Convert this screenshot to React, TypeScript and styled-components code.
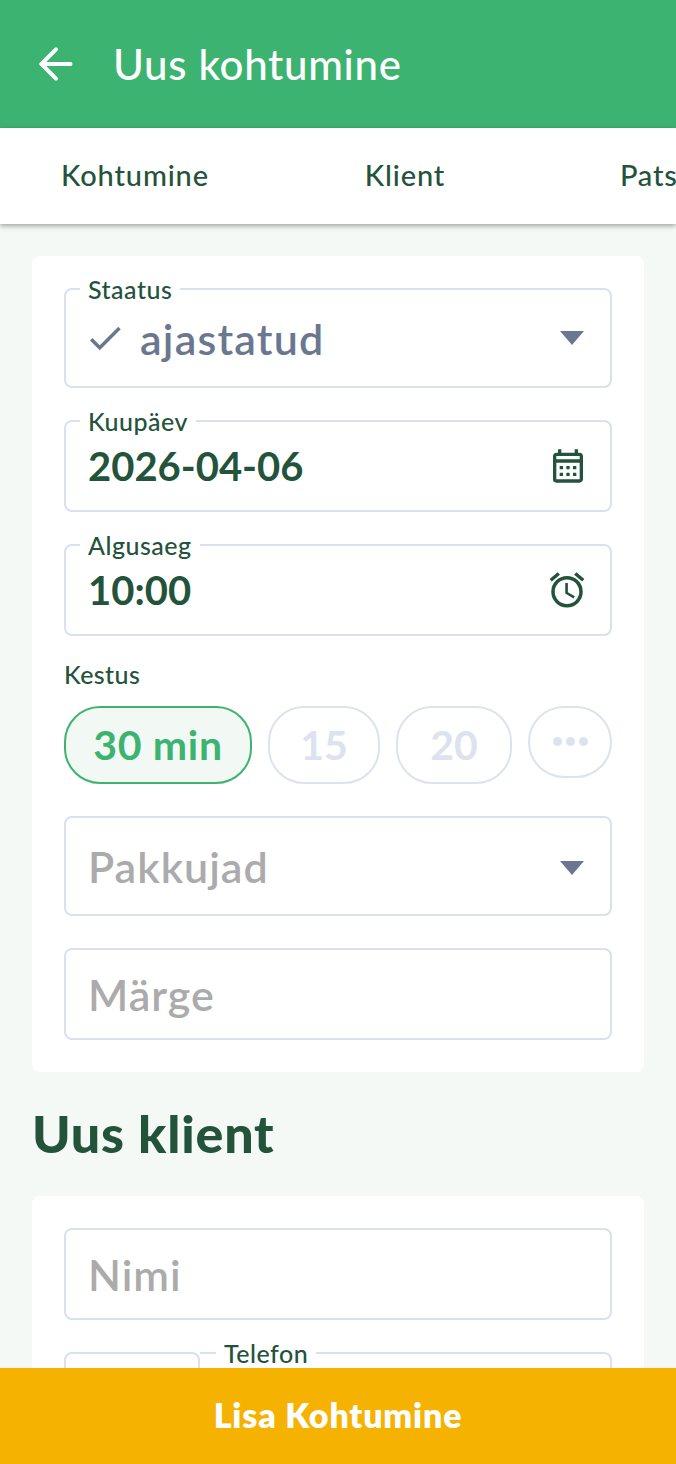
import React from "react";
import styled, { createGlobalStyle } from "styled-components";
import { ArrowLeft } from "lucide-react";
import { MdCheck, MdOutlineCalendarMonth, MdOutlineAlarm } from "react-icons/md";

const Global = createGlobalStyle`
  html, body { margin: 0; padding: 0; height: 100%; }
  #root { height: 100%; }
  * { box-sizing: border-box; }
  body { font-family: "Lato", "Noto Sans", sans-serif; }
`;

const ink = "#24533b";
const line = "#d9e2ec";
const chipLine = "#dde3ee";

const Screen = styled.div`
  width: 676px; height: 1464px; display: flex; flex-direction: column;
  overflow: hidden; background: #f5f9f6; color: ${ink};
`;
const AppBar = styled.header`
  height: 128px; flex: none; background: #3cb371; color: #fff;
  display: flex; align-items: center; padding-left: 31px; gap: 32px;
`;
const Title = styled.h1`
  margin: 0; font-size: 42px; font-weight: 500; letter-spacing: 0.7px;
`;
const Tabs = styled.nav`
  height: 96px; flex: none; background: #fff; display: flex; overflow: hidden;
  box-shadow: 0 2px 5px rgba(0,0,0,.35); position: relative; z-index: 1;
`;
const Tab = styled.div`
  width: 270px; flex: none; display: flex; align-items: center; justify-content: center;
  padding-bottom: 4px; font-size: 29px; font-weight: 500; letter-spacing: 0.85px;
`;
const Body = styled.main`
  flex: 1; min-height: 0; overflow: hidden; padding: 32px 32px 0;
`;
const Card = styled.section`
  background: #fff; border-radius: 8px; padding: 32px;
`;
const Notched = styled.fieldset<{ $h: number; $mt: number }>`
  margin: ${p => p.$mt}px 0 0; padding: 0 22px; min-width: 0;
  border: 2px solid ${line}; border-radius: 8px; height: ${p => p.$h + 12}px;
  display: block;
`;
const Legend = styled.legend`
  padding: 0 8px; margin-left: -8px; font-size: 25px; line-height: 26px; font-weight: 500;
  letter-spacing: 0.5px;
`;
const FieldRow = styled.div<{ $h: number }>`
  height: ${p => p.$h}px; display: flex; align-items: center; justify-content: space-between;
`;
const Plain = styled.div<{ $h: number; $first?: boolean }>`
  height: ${p => p.$h}px; margin-top: ${p => (p.$first ? 0 : 32)}px; padding: 0 22px;
  border: 2px solid ${line}; border-radius: 8px;
  display: flex; align-items: center; justify-content: space-between;
`;
const Left = styled.div`
  display: flex; align-items: center; gap: 14px; min-width: 0; margin-left: -4px;
`;
const Status = styled.span`
  font-size: 43px; font-weight: 600; color: #6b7790; letter-spacing: 1.2px;
`;
const Value = styled.span`
  font-size: 40px; font-weight: 700;
`;
const Placeholder = styled.span`
  font-size: 43px; font-weight: 600; color: #ababab; letter-spacing: 1px;
`;
const Caret = styled.svg<{ $drop?: boolean }>`
  width: 24px; height: 14px; fill: #6b7790; flex: none; margin-right: 4px;
  margin-top: ${p => (p.$drop ? 3 : 0)}px;
`;
const Label = styled.div`
  margin-top: 22px; font-size: 25px; line-height: 32px; font-weight: 500; letter-spacing: 0.4px;
`;
const Chips = styled.div`
  margin-top: 16px; display: flex; align-items: flex-start; justify-content: space-between;
`;
const Chip = styled.div<{ $w: number; $on?: boolean; $h?: number }>`
  width: ${p => p.$w}px; height: ${p => p.$h ?? 78}px; border-radius: 36px; padding-bottom: 2px;
  display: flex; align-items: center; justify-content: center;
  border: 2px solid ${p => (p.$on ? "#3cb371" : chipLine)};
  background: ${p => (p.$on ? "#f2f9f5" : "#fff")};
  color: ${p => (p.$on ? "#3cb371" : chipLine)};
  font-size: 41px; font-weight: 700; letter-spacing: ${p => (p.$on ? 0.7 : 0)}px;
`;
const Dots = styled.span`
  display: flex; gap: 4px;
`;
const Dot = styled.i`
  width: 9px; height: 9px; border-radius: 50%; background: ${chipLine}; display: block;
`;
const Heading = styled.h2`
  margin: 29px 0 31px 0; font-size: 52px; line-height: 64px; font-weight: 900; letter-spacing: 0.8px;
`;
const Phone = styled.div`
  display: flex; margin-top: 20px;
`;
const Country = styled.div`
  width: 136px; height: 80px; margin-top: 12px; flex: none; border: 2px solid ${line};
  border-radius: 8px 8px 0 0;
`;
const PhoneField = styled.fieldset`
  flex: 1; height: 100px; margin: 0; padding: 0 0 0 24px; min-width: 0;
  border: 2px solid ${line}; border-left: 0; border-radius: 0 8px 0 0;
`;
const Footer = styled.footer`
  height: 96px; flex: none; background: #f5b200; color: #fff; padding-bottom: 3px;
  display: flex; align-items: center; justify-content: center;
  font-size: 34px; font-weight: 800; letter-spacing: 0.8px;
`;

export default function App() {
  return (
    <Screen>
      <Global />
      <AppBar>
        <ArrowLeft size={50} strokeWidth={1.9} />
        <Title>Uus kohtumine</Title>
      </AppBar>
      <Tabs>
        <Tab>Kohtumine</Tab>
        <Tab>Klient</Tab>
        <Tab>Patsient</Tab>
      </Tabs>
      <Body>
        <Card>
          <Notched $h={100} $mt={-12}>
            <Legend>Staatus</Legend>
            <FieldRow $h={72}>
              <Left>
                <MdCheck size={42} color="#6b7790" />
                <Status>ajastatud</Status>
              </Left>
              <Caret viewBox="0 0 24 14"><path d="M0 0h24L12 14z" /></Caret>
            </FieldRow>
          </Notched>
          <Notched $h={92} $mt={20}>
            <Legend>Kuupäev</Legend>
            <FieldRow $h={64}>
              <Value>2026-04-06</Value>
              <MdOutlineCalendarMonth size={40} />
            </FieldRow>
          </Notched>
          <Notched $h={92} $mt={20}>
            <Legend>Algusaeg</Legend>
            <FieldRow $h={64}>
              <Value>10:00</Value>
              <MdOutlineAlarm size={42} />
            </FieldRow>
          </Notched>
          <Label>Kestus</Label>
          <Chips>
            <Chip $w={188} $on>30 min</Chip>
            <Chip $w={112}>15</Chip>
            <Chip $w={116}>20</Chip>
            <Chip $w={84} $h={72}>
              <Dots><Dot /><Dot /><Dot /></Dots>
            </Chip>
          </Chips>
          <Plain $h={100}>
            <Placeholder>Pakkujad</Placeholder>
            <Caret $drop viewBox="0 0 24 14"><path d="M0 0h24L12 14z" /></Caret>
          </Plain>
          <Plain $h={92}>
            <Placeholder>Märge</Placeholder>
          </Plain>
        </Card>
        <Heading>Uus klient</Heading>
        <Card>
          <Plain $h={92} $first>
            <Placeholder>Nimi</Placeholder>
          </Plain>
          <Phone>
            <Country />
            <PhoneField>
              <Legend>Telefon</Legend>
            </PhoneField>
          </Phone>
        </Card>
      </Body>
      <Footer>Lisa Kohtumine</Footer>
    </Screen>
  );
}
